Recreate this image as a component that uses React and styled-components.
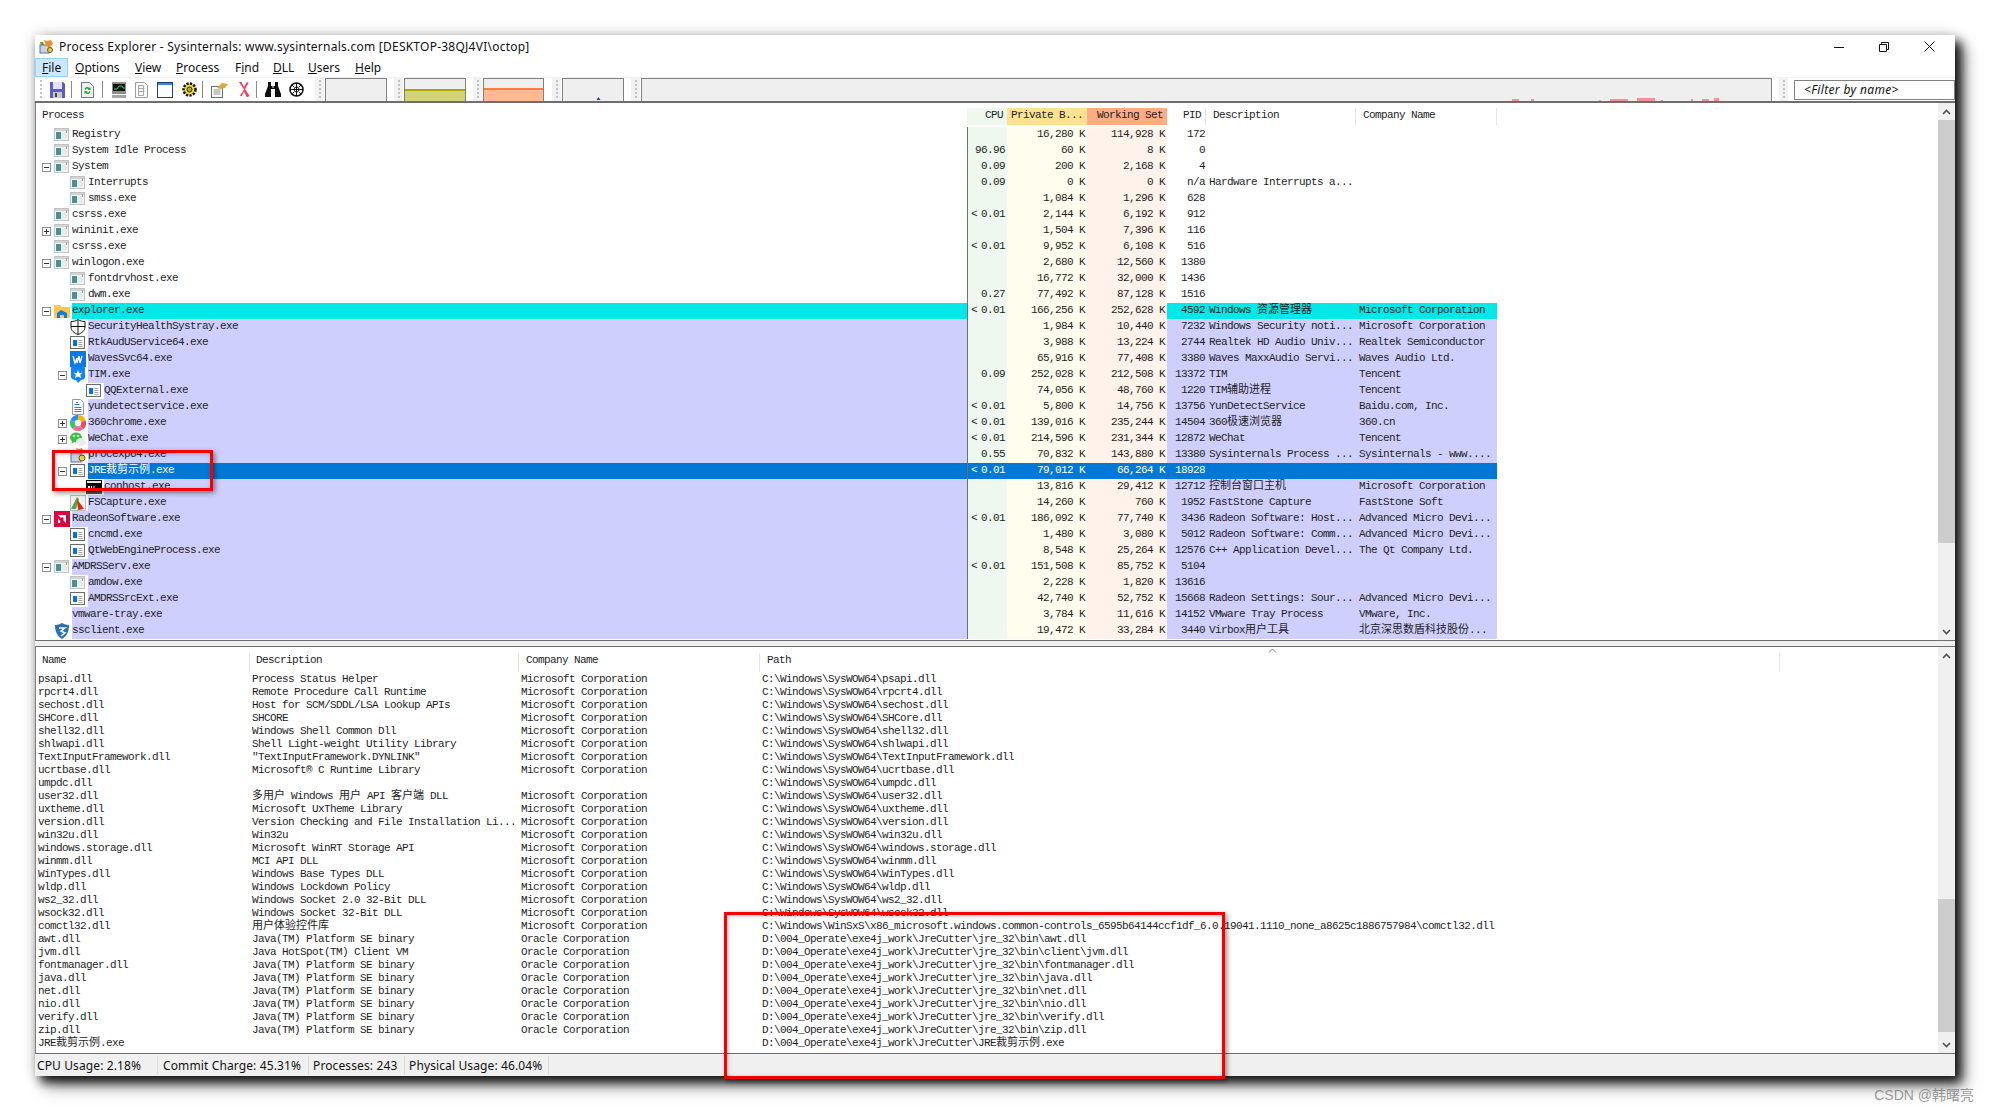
import React from 'react';
import styled, { createGlobalStyle } from 'styled-components';

const Global = createGlobalStyle`
  html, body { margin: 0; padding: 0; background: #fff; }
  body { width: 1990px; height: 1110px; overflow: hidden; position: relative; }
`;

const MONO = `"Liberation Mono", "Noto Sans CJK SC", monospace`;
const UI = `"Noto Sans", "Liberation Sans", sans-serif`;

const Page = styled.div`
  padding: 35px 0 0 35px;
`;

const Window = styled.div`
  width: 1920px;
  height: 1040px;
  display: flex;
  flex-direction: column;
  background: #fff;
  box-shadow: 6px 7px 10px rgba(0, 0, 0, 0.9), 10px 12px 16px rgba(0, 0, 0, 0.35), 0 0 14px rgba(0, 0, 0, 0.2);
  font-family: ${MONO};
  font-size: 11px;
  letter-spacing: -0.6px;
  color: #1d1d1d;
`;

const TitleBar = styled.div`
  flex: none;
  height: 23px;
  display: flex;
  align-items: center;
  padding-left: 4px;
  font-family: ${UI};
  font-size: 12px;
  letter-spacing: 0;
  color: #111;
`;

const TitleText = styled.span`
  margin-left: 5px;
  flex: 1;
  letter-spacing: 0.24px;
`;

const WinButtons = styled.div`
  display: flex;
  align-items: center;
  gap: 35px;
  padding-right: 20px;
`;

const MenuBar = styled.div`
  flex: none;
  height: 19px;
  display: flex;
  align-items: center;
  font-family: ${UI};
  font-size: 12px;
  letter-spacing: 0;
  color: #111;
`;

const MenuItem = styled.div`
  box-sizing: border-box;
  height: 19px;
  line-height: 18px;
  width: ${(p) => p.$w}px;
  padding-left: 6px;
  background: ${(p) => (p.$active ? '#cce8ff' : 'transparent')};
  border: 1px solid ${(p) => (p.$active ? '#99d1ff' : 'transparent')};
  u { text-underline-offset: 1px; }
`;

const Toolbar = styled.div`
  flex: none;
  box-sizing: border-box;
  height: 26px;
  display: flex;
  align-items: stretch;
  border-bottom: 2px solid #6e6e6e;
  border-top: 1px solid #f2f2f2;
`;

const Grip = styled.div`
  width: ${(p) => p.$w || 9}px;
  margin-left: ${(p) => p.$ml || 0}px;
  flex: none;
  background: ${(p) => (p.$plain ? 'transparent' : '#f2f2f2')};
  display: flex;
  justify-content: center;
  &::before {
    content: '';
    width: 2px;
    background: repeating-linear-gradient(#c2c2c2 0 2px, transparent 2px 4px);
    margin: 2px 0;
  }
`;

const ToolIcon = styled.div`
  flex: none;
  width: ${(p) => p.$w}px;
  margin-left: ${(p) => p.$ml}px;
  display: flex;
  align-items: center;
`;

const ToolSep = styled.div`
  flex: none;
  width: 1px;
  margin: 3px 0 3px ${(p) => p.$ml}px;
  background: #8a8a8a;
`;

const Graph = styled.div`
  box-sizing: border-box;
  position: relative;
  flex: none;
  width: ${(p) => p.$w}px;
  margin-left: ${(p) => p.$ml}px;
  background: #efefef;
  border: 1px solid #808080;
  border-bottom: none;
  overflow: hidden;
`;

const GraphFill = styled.div`
  position: absolute;
  left: 0;
  right: 0;
  bottom: 0;
  height: ${(p) => p.$h}px;
  background: ${(p) => p.$fill};
  border-top: 2px solid ${(p) => p.$line};
`;

const GraphSvg = styled.svg`
  position: absolute;
  left: 0;
  bottom: 0;
`;

const FilterBox = styled.div`
  box-sizing: border-box;
  flex: none;
  width: 161px;
  height: 20px;
  margin: 2px 0 0 6px;
  padding-left: 9px;
  border: 1px solid #808080;
  font-family: ${UI};
  font-size: 12px;
  font-style: italic;
  letter-spacing: 0.35px;
  line-height: 18px;
  color: #111;
`;

const Pane = styled.div`
  flex: none;
  height: ${(p) => p.$h}px;
  display: flex;
  border-left: 1px solid #808080;
  border-top: ${(p) => (p.$line ? '1px solid #6e6e6e' : 'none')};
  border-bottom: 1px solid #6e6e6e;
`;

const ListArea = styled.div`
  flex: 1;
  min-width: 0;
  overflow: hidden;
`;

const HeaderRow = styled.div`
  display: flex;
  height: ${(p) => p.$h}px;
`;

const HeadCell = styled.div`
  box-sizing: border-box;
  position: relative;
  flex: none;
  width: ${(p) => p.$w}px;
  height: ${(p) => p.$ch}px;
  margin-top: ${(p) => p.$mt}px;
  padding: ${(p) => p.$pad || '0'};
  line-height: ${(p) => p.$lh}px;
  text-align: ${(p) => (p.$right ? 'right' : 'left')};
  background: ${(p) => p.$bg || 'transparent'};
  border-right: ${(p) => (p.$sep ? '1px solid #e4e4e4' : 'none')};
  white-space: nowrap;
`;

const SortCaret = styled.svg`
  position: absolute;
  left: 508px;
  top: -5px;
`;

const ProcRow = styled.div`
  display: flex;
  height: 16px;
  line-height: 15px;
  white-space: nowrap;
  color: ${(p) => (p.$tone === 'sel' ? '#fff' : 'inherit')};
`;

const TreeCell = styled.div`
  flex: none;
  width: 931px;
  display: flex;
  padding-left: ${(p) => 6 + p.$depth * 16}px;
  box-sizing: border-box;
`;

const ExpandSlot = styled.div`
  flex: none;
  width: 12px;
  padding-top: 4px;
  box-sizing: border-box;
`;

const ExpandBox = styled.div`
  box-sizing: border-box;
  width: 9px;
  height: 9px;
  position: relative;
  border: 1px solid #8d8d8d;
  background: #fff;
  &::before {
    content: '';
    position: absolute;
    left: 1px;
    top: 3px;
    width: 5px;
    height: 1px;
    background: #333;
  }
  &::after {
    content: '';
    display: ${(p) => (p.$open ? 'none' : 'block')};
    position: absolute;
    left: 3px;
    top: 1px;
    width: 1px;
    height: 5px;
    background: #333;
  }
`;

const IconSlot = styled.div`
  flex: none;
  width: 18px;
  height: 16px;
  svg { display: block; }
`;

const tones = {
  none: 'transparent',
  cyan: '#00e8e8',
  violet: '#cfcffd',
  sel: '#0078d7',
};

const NameCell = styled.div`
  flex: 1;
  background: ${(p) => tones[p.$tone]};
`;

const DataCell = styled.div`
  box-sizing: border-box;
  flex: none;
  width: ${(p) => p.$w}px;
  padding: ${(p) => p.$pad || '0'};
  text-align: ${(p) => (p.$right ? 'right' : 'left')};
  background: ${(p) => p.$bg};
  border-left: ${(p) => (p.$divide ? '1px solid #707070' : 'none')};
`;

const CpuInner = styled.div`
  display: flex;
  justify-content: space-between;
  padding: 0 2px 0 3px;
`;

const DllRow = styled.div`
  display: flex;
  box-sizing: border-box;
  height: 13px;
  padding-top: 1px;
  line-height: 13px;
  white-space: nowrap;
`;

const DllCell = styled.div`
  flex: none;
  width: ${(p) => p.$w}px;
  padding-left: 2px;
  box-sizing: border-box;
`;

const Scrollbar = styled.div`
  flex: none;
  width: 17px;
  display: flex;
  flex-direction: column;
  background: #f0f0f0;
`;

const ScrollArrow = styled.div`
  flex: none;
  height: 17px;
  display: flex;
  align-items: center;
  justify-content: center;
`;

const ScrollTrack = styled.div`
  flex: 1;
`;

const ScrollThumb = styled.div`
  height: ${(p) => p.$h}px;
  margin-top: ${(p) => p.$top}px;
  background: #cdcdcd;
`;

const Splitter = styled.div`
  flex: none;
  height: 5px;
  background: #f0f0f0;
`;

const StatusBar = styled.div`
  flex: none;
  height: 22px;
  display: flex;
  background: #f0f0f0;
  font-family: ${UI};
  font-size: 12px;
  letter-spacing: 0.12px;
  color: #111;
`;

const StatusCell = styled.div`
  box-sizing: border-box;
  flex: none;
  width: ${(p) => p.$w}px;
  height: 18px;
  padding-left: ${(p) => p.$pad}px;
  border-right: 1px solid #d9d9d9;
  margin: 2px 0;
  line-height: 20px;
`;

const Callout = styled.div`
  position: absolute;
  box-sizing: border-box;
  left: ${(p) => p.$x}px;
  top: ${(p) => p.$y}px;
  width: ${(p) => p.$w}px;
  height: ${(p) => p.$h}px;
  border: 3px solid #f40000;
  box-shadow: 2px 2px 5px rgba(0, 0, 0, 0.45), inset 1px 1px 4px rgba(0, 0, 0, 0.25);
`;

const Watermark = styled.div`
  position: absolute;
  right: 16px;
  bottom: 6px;
  font-family: "Liberation Sans", "Noto Sans CJK SC", sans-serif;
  font-size: 14px;
  color: rgba(110, 110, 110, 0.7);
`;

const Cjk = styled.span`
  font-family: "Noto Sans CJK SC", sans-serif;
  font-size: 11px;
  letter-spacing: 0;
  line-height: 0;
`;

const Txt = ({ s }) =>
  String(s)
    .split(/([\u4e00-\u9fff]+)/)
    .map((part, i) => (/[\u4e00-\u9fff]/.test(part) ? <Cjk key={i}>{part}</Cjk> : part));

/* ---------- icons ---------- */

const ExeIcon = () => (
  <svg width="16" height="16" viewBox="0 0 16 16">
    <rect x="0.500" y="1.500" width="14" height="12" fill="#f4f4f4" stroke="#c2c2c2" />
    <rect x="1" y="2" width="13" height="2" fill="#d4d4d4" />
    <rect x="2" y="5" width="5" height="7" fill="#4d908d" />
    <rect x="8" y="5" width="5" height="7" fill="#e6ecec" />
    <rect x="12" y="3" width="1" height="3" fill="#999" />
  </svg>
);

const WinIcon = () => (
  <svg width="16" height="16" viewBox="0 0 16 16">
    <rect x="0.500" y="1.500" width="14" height="12" fill="#fff" stroke="#6b6b6b" />
    <rect x="3" y="5" width="4" height="6" fill="#0b72d4" />
    <path d="M8.500 5.500h4M8.500 7.500h4M8.500 9.500h4M8.500 11.500h4" stroke="#a0a0a0" />
  </svg>
);

const FolderIcon = () => (
  <svg width="16" height="16" viewBox="0 0 16 16">
    <path d="M0 2h6l2 2h8v11H0z" fill="#f7c94e" />
    <path d="M3 15V10l4-3 6 3v5h-3v-3H6v3z" fill="#1978d4" />
  </svg>
);

const ShieldIcon = () => (
  <svg width="16" height="16" viewBox="0 0 16 16">
    <path d="M8 .5C6 2 3.500 2.500 1 2.500V8c0 3.500 3 6 7 7.500 4-1.500 7-4 7-7.500V2.500C12.500 2.500 10 2 8 .5z" fill="#fff" stroke="#111" />
    <path d="M8 1v14M1 7.500h14" stroke="#111" />
  </svg>
);

const WavesIcon = () => (
  <svg width="16" height="16" viewBox="0 0 16 16">
    <rect width="16" height="16" fill="#0a78e6" />
    <path d="M3 5l2 7 2-5v5l2-7 1 7 2-7" fill="none" stroke="#fff" strokeWidth="1.300" />
  </svg>
);

const TimIcon = () => (
  <svg width="16" height="16" viewBox="0 0 16 16">
    <path d="M2 0h12a1 1 0 0 1 1 1v9c0 2-2 3-4 3l-3 3-2-3c-2 0-5-1-5-3V1a1 1 0 0 1 1-1z" fill="#1186f2" />
    <path d="M8 3l1.300 3 3.200-.3-2.300 2.300 1 3L8 9.500 4.800 11l1-3L3.500 5.700 6.700 6z" fill="#fff" />
  </svg>
);

const DocIcon = () => (
  <svg width="16" height="16" viewBox="0 0 16 16">
    <path d="M2.500.500h8l3 3v12h-11z" fill="#fff" stroke="#8c9bb0" />
    <path d="M6 3.500h2M4.500 5.500h5" stroke="#2a6fc0" strokeWidth="1.200" />
    <path d="M4.500 8.500h7M4.500 10.500h7M4.500 12.500h7" stroke="#4a7dbb" />
  </svg>
);

const ChromeIcon = () => (
  <svg width="16" height="16" viewBox="0 0 16 16">
    <path d="M8 8V0a8 8 0 0 1 7.600 5.500z" fill="#f7b500" />
    <path d="M8 8l7.600-2.500A8 8 0 0 1 13 14.300z" fill="#ea4a6a" />
    <path d="M8 8l5 6.300A8 8 0 0 1 3 14.300z" fill="#f76b9a" />
    <path d="M8 8l-5 6.300A8 8 0 0 1 .4 5.500z" fill="#35c95d" />
    <path d="M8 8L.4 5.500A8 8 0 0 1 8 0z" fill="#2b8df0" />
    <circle cx="8" cy="8" r="3.200" fill="#fff" />
  </svg>
);

const WeChatIcon = () => (
  <svg width="16" height="16" viewBox="0 0 16 16">
    <ellipse cx="6" cy="6.500" rx="6" ry="5" fill="#3fc04a" />
    <path d="M2 9.500l-.5 3 3-1.500z" fill="#3fc04a" />
    <ellipse cx="11" cy="11" rx="5" ry="4" fill="#e9eeea" />
    <circle cx="4" cy="5" r="0.900" fill="#fff" />
    <circle cx="8" cy="5" r="0.900" fill="#fff" />
  </svg>
);

const ProcexpIcon = () => (
  <svg width="16" height="16" viewBox="0 0 16 16">
    <rect x="1" y="6" width="10" height="9" fill="#c9d3e6" stroke="#5e6f94" />
    <path d="M6 1l3 1 3-1 2 4-3 3-3-1z" fill="#e8902c" />
    <circle cx="12" cy="11" r="3" fill="#f2cb4a" stroke="#6f5a10" />
  </svg>
);

const ConsoleIcon = () => (
  <svg width="16" height="16" viewBox="0 0 16 16">
    <rect y="1" width="16" height="14" fill="#000" />
    <rect x="1" y="2" width="14" height="2" fill="#e4e4e4" />
    <path d="M2 7h2v3H2zM5 7h1v3H5zM7.500 7h1v3h-1z" fill="#fff" />
    <rect y="13" width="16" height="2" fill="#555" />
  </svg>
);

const CaptureIcon = () => (
  <svg width="16" height="16" viewBox="0 0 16 16">
    <rect x="0.500" y="0.500" width="15" height="15" fill="#f2f2f2" stroke="#bbb" />
    <path d="M1 14L7 2l2 2-3 10z" fill="#5aa63a" />
    <path d="M7 4l7 10-6 1z" fill="#d62a1a" />
  </svg>
);

const RadeonIcon = () => (
  <svg width="16" height="16" viewBox="0 0 16 16">
    <rect width="16" height="16" fill="#e0003c" />
    <path d="M4 4h8v8l-2.500-2.500V6.500H6.500zM4 12V7.500L6.200 9.700V12z" fill="#fff" />
  </svg>
);

const GuardIcon = () => (
  <svg width="16" height="16" viewBox="0 0 16 16">
    <path d="M1 2c3 0 5-1 7-2 2 1 4 2 7 2 0 6-2 11-7 14C3 13 1 8 1 2z" fill="#2a6fb0" />
    <path d="M5 5h6L7 8l4 2-4 3" fill="none" stroke="#fff" strokeWidth="1.500" />
  </svg>
);

const ICONS = {
  exe: ExeIcon, win: WinIcon, folder: FolderIcon, shield: ShieldIcon, waves: WavesIcon,
  tim: TimIcon, doc: DocIcon, chrome: ChromeIcon, wechat: WeChatIcon, procexp: ProcexpIcon,
  console: ConsoleIcon, capture: CaptureIcon, radeon: RadeonIcon, guard: GuardIcon,
};

const AppLogo = () => (
  <svg width="15" height="14" viewBox="0 0 15 14">
    <rect x="1" y="5" width="9" height="8" fill="#c9d3e6" stroke="#5e6f94" />
    <path d="M5 0l3 1 4-1 2 4-3 3-4-1z" fill="#e8902c" />
    <path d="M1 2l3 0 1 3H2z" fill="#4f9a3c" />
    <circle cx="11" cy="10" r="2.500" fill="#f2cb4a" stroke="#6f5a10" />
  </svg>
);

const Save = () => (
  <svg width="15" height="16" viewBox="0 0 15 16">
    <path d="M0 0h13l2 2v14H0z" fill="#5c5cc4" />
    <rect x="3" y="0" width="9" height="7" fill="#e2e2f6" />
    <rect x="3" y="10" width="9" height="6" fill="#c8c8d0" />
    <rect x="5" y="11" width="2" height="4" fill="#444" />
  </svg>
);

const Refresh = () => (
  <svg width="13" height="16" viewBox="0 0 13 16">
    <path d="M.5.500h8l4 4v11H.5z" fill="#eef0f4" stroke="#6e7890" />
    <path d="M3.500 7a3 3 0 0 1 5-1l1-1v3H6.500l1-1a2 2 0 0 0-3 1zM9.500 10a3 3 0 0 1-5 1l-1 1V9h3l-1 1a2 2 0 0 0 3-1z" fill="#2da02d" />
  </svg>
);

const Monitor = () => (
  <svg width="14" height="16" viewBox="0 0 14 16">
    <rect width="14" height="12" fill="#8d8d8d" />
    <rect x="1" y="2" width="12" height="7" fill="#111" />
    <path d="M2 7h3l2-3h3l1 2h2" fill="none" stroke="#2fe02f" />
    <rect y="13" width="14" height="3" fill="#a5a5a5" />
  </svg>
);

const Pages = () => (
  <svg width="13" height="16" viewBox="0 0 13 16">
    <path d="M.5.500h9l3 3v12H.5z" fill="#fff" stroke="#9c9c9c" />
    <path d="M3.500 3.500h5v10h-5zM3.500 6.500h6M3.500 9.500h6" fill="none" stroke="#a8a8a8" />
  </svg>
);

const WinTool = () => (
  <svg width="16" height="16" viewBox="0 0 16 16">
    <rect x="0.500" y="0.500" width="15" height="15" fill="#fff" stroke="#1f3f70" />
    <rect x="1" y="1" width="14" height="2" fill="#3a86dd" />
  </svg>
);

const Gear = () => (
  <svg width="15" height="17" viewBox="0 0 15 17">
    <circle cx="7.500" cy="8.500" r="6" fill="#f1df2e" stroke="#111" strokeWidth="2.500" strokeDasharray="2.200 1.300" />
    <circle cx="7.500" cy="8.500" r="2.500" fill="#c5a800" stroke="#222" />
  </svg>
);

const Props = () => (
  <svg width="17" height="16" viewBox="0 0 17 16">
    <rect x="0.500" y="4.500" width="11" height="11" fill="#fff" stroke="#5d6f90" />
    <path d="M2.500 8h7M2.500 10h7M2.500 12h7" stroke="#8a8a8a" />
    <path d="M6 6l5-5 6 1-3 4-5 1z" fill="#d9a83a" />
  </svg>
);

const KillX = () => (
  <svg width="12" height="15" viewBox="0 0 12 15">
    <path d="M1 0l2.500 0 2.500 5 3-5 1.500 1-3.500 6 4.500 7-2.500 1.500-3-6-2.500 5-1.500-1L6 7.500z" fill="#f43a66" />
  </svg>
);

const Binoculars = () => (
  <svg width="16" height="15" viewBox="0 0 16 15">
    <path d="M3 0h3v4h4V0h3v4l3 8v3h-6V7H6v8H0v-3l3-8z" fill="#0d0d0d" />
    <rect x="7" y="4" width="2" height="2" fill="#777" />
  </svg>
);

const Target = () => (
  <svg width="15" height="15" viewBox="0 0 15 15">
    <circle cx="7.500" cy="7.500" r="6.500" fill="#fff" stroke="#111" strokeWidth="1.500" />
    <path d="M7.500 1v13M1 7.500h13" stroke="#111" />
    <circle cx="7.500" cy="7.500" r="2.500" fill="none" stroke="#111" />
    <path d="M3 3l2 2M12 3l-2 2M3 12l2-2M12 12l-2-2" stroke="#111" />
  </svg>
);

// x, width, height of the small pink spikes in the wide graph
const NOISE = [
  [870, 7, 2], [889, 3, 2], [957, 2, 1], [968, 18, 2], [995, 18, 3],
  [1019, 2, 1], [1049, 2, 2], [1060, 7, 2], [1072, 5, 3],
];

/* ---------- data ---------- */

const MS = 'Microsoft Corporation';
const AMD = 'Advanced Micro Devi...';

const procs = [
  { n: 'Registry', d: 0, i: 'exe', p: '16,280 K', w: '114,928 K', id: '172' },
  { n: 'System Idle Process', d: 0, i: 'exe', c: '96.96', p: '60 K', w: '8 K', id: '0' },
  { n: 'System', d: 0, b: 'open', i: 'exe', c: '0.09', p: '200 K', w: '2,168 K', id: '4' },
  { n: 'Interrupts', d: 1, i: 'exe', c: '0.09', p: '0 K', w: '0 K', id: 'n/a', ds: 'Hardware Interrupts a...' },
  { n: 'smss.exe', d: 1, i: 'exe', p: '1,084 K', w: '1,296 K', id: '628' },
  { n: 'csrss.exe', d: 0, i: 'exe', c: '< 0.01', p: '2,144 K', w: '6,192 K', id: '912' },
  { n: 'wininit.exe', d: 0, b: 'closed', i: 'exe', p: '1,504 K', w: '7,396 K', id: '116' },
  { n: 'csrss.exe', d: 0, i: 'exe', c: '< 0.01', p: '9,952 K', w: '6,108 K', id: '516' },
  { n: 'winlogon.exe', d: 0, b: 'open', i: 'exe', p: '2,680 K', w: '12,560 K', id: '1380' },
  { n: 'fontdrvhost.exe', d: 1, i: 'exe', p: '16,772 K', w: '32,000 K', id: '1436' },
  { n: 'dwm.exe', d: 1, i: 'exe', c: '0.27', p: '77,492 K', w: '87,128 K', id: '1516' },
  { n: 'explorer.exe', d: 0, b: 'open', i: 'folder', t: 'cyan', c: '< 0.01', p: '166,256 K', w: '252,628 K', id: '4592', ds: 'Windows 资源管理器', co: MS },
  { n: 'SecurityHealthSystray.exe', d: 1, i: 'shield', t: 'violet', p: '1,984 K', w: '10,440 K', id: '7232', ds: 'Windows Security noti...', co: MS },
  { n: 'RtkAudUService64.exe', d: 1, i: 'win', t: 'violet', p: '3,988 K', w: '13,224 K', id: '2744', ds: 'Realtek HD Audio Univ...', co: 'Realtek Semiconductor' },
  { n: 'WavesSvc64.exe', d: 1, i: 'waves', t: 'violet', p: '65,916 K', w: '77,408 K', id: '3380', ds: 'Waves MaxxAudio Servi...', co: 'Waves Audio Ltd.' },
  { n: 'TIM.exe', d: 1, b: 'open', i: 'tim', t: 'violet', c: '0.09', p: '252,028 K', w: '212,508 K', id: '13372', ds: 'TIM', co: 'Tencent' },
  { n: 'QQExternal.exe', d: 2, i: 'win', t: 'violet', p: '74,056 K', w: '48,760 K', id: '1220', ds: 'TIM辅助进程', co: 'Tencent' },
  { n: 'yundetectservice.exe', d: 1, i: 'doc', t: 'violet', c: '< 0.01', p: '5,800 K', w: '14,756 K', id: '13756', ds: 'YunDetectService', co: 'Baidu.com, Inc.' },
  { n: '360chrome.exe', d: 1, b: 'closed', i: 'chrome', t: 'violet', c: '< 0.01', p: '139,016 K', w: '235,244 K', id: '14504', ds: '360极速浏览器', co: '360.cn' },
  { n: 'WeChat.exe', d: 1, b: 'closed', i: 'wechat', t: 'violet', c: '< 0.01', p: '214,596 K', w: '231,344 K', id: '12872', ds: 'WeChat', co: 'Tencent' },
  { n: 'procexp64.exe', d: 1, i: 'procexp', t: 'violet', c: '0.55', p: '70,832 K', w: '143,880 K', id: '13380', ds: 'Sysinternals Process ...', co: 'Sysinternals - www....' },
  { n: 'JRE裁剪示例.exe', d: 1, b: 'open', i: 'win', t: 'sel', c: '< 0.01', p: '79,012 K', w: '66,264 K', id: '18928' },
  { n: 'conhost.exe', d: 2, i: 'console', t: 'violet', p: '13,816 K', w: '29,412 K', id: '12712', ds: '控制台窗口主机', co: MS },
  { n: 'FSCapture.exe', d: 1, i: 'capture', t: 'violet', p: '14,260 K', w: '760 K', id: '1952', ds: 'FastStone Capture', co: 'FastStone Soft' },
  { n: 'RadeonSoftware.exe', d: 0, b: 'open', i: 'radeon', t: 'violet', c: '< 0.01', p: '186,092 K', w: '77,740 K', id: '3436', ds: 'Radeon Software: Host...', co: AMD },
  { n: 'cncmd.exe', d: 1, i: 'win', t: 'violet', p: '1,480 K', w: '3,080 K', id: '5012', ds: 'Radeon Software: Comm...', co: AMD },
  { n: 'QtWebEngineProcess.exe', d: 1, i: 'win', t: 'violet', p: '8,548 K', w: '25,264 K', id: '12576', ds: 'C++ Application Devel...', co: 'The Qt Company Ltd.' },
  { n: 'AMDRSServ.exe', d: 0, b: 'open', i: 'exe', t: 'violet', c: '< 0.01', p: '151,508 K', w: '85,752 K', id: '5104' },
  { n: 'amdow.exe', d: 1, i: 'exe', t: 'violet', p: '2,228 K', w: '1,820 K', id: '13616' },
  { n: 'AMDRSSrcExt.exe', d: 1, i: 'win', t: 'violet', p: '42,740 K', w: '52,752 K', id: '15668', ds: 'Radeon Settings: Sour...', co: AMD },
  { n: 'vmware-tray.exe', d: 0, t: 'violet', p: '3,784 K', w: '11,616 K', id: '14152', ds: 'VMware Tray Process', co: 'VMware, Inc.' },
  { n: 'ssclient.exe', d: 0, i: 'guard', t: 'violet', p: '19,472 K', w: '33,284 K', id: '3440', ds: 'Virbox用户工具', co: '北京深思数盾科技股份...' },
];

const SYS = 'C:\\Windows\\SysWOW64\\';
const JRE = 'D:\\004_Operate\\exe4j_work\\JreCutter\\jre_32\\bin\\';
const JAVA = 'Java(TM) Platform SE binary';
const ORA = 'Oracle Corporation';

const sysDll = (n, ds) => [n, ds, MS, SYS + n];

const dlls = [
  sysDll('psapi.dll', 'Process Status Helper'),
  sysDll('rpcrt4.dll', 'Remote Procedure Call Runtime'),
  sysDll('sechost.dll', 'Host for SCM/SDDL/LSA Lookup APIs'),
  sysDll('SHCore.dll', 'SHCORE'),
  sysDll('shell32.dll', 'Windows Shell Common Dll'),
  sysDll('shlwapi.dll', 'Shell Light-weight Utility Library'),
  sysDll('TextInputFramework.dll', '"TextInputFramework.DYNLINK"'),
  sysDll('ucrtbase.dll', 'Microsoft® C Runtime Library'),
  ['umpdc.dll', '', '', SYS + 'umpdc.dll'],
  sysDll('user32.dll', '多用户 Windows 用户 API 客户端 DLL'),
  sysDll('uxtheme.dll', 'Microsoft UxTheme Library'),
  sysDll('version.dll', 'Version Checking and File Installation Li...'),
  sysDll('win32u.dll', 'Win32u'),
  sysDll('windows.storage.dll', 'Microsoft WinRT Storage API'),
  sysDll('winmm.dll', 'MCI API DLL'),
  sysDll('WinTypes.dll', 'Windows Base Types DLL'),
  sysDll('wldp.dll', 'Windows Lockdown Policy'),
  sysDll('ws2_32.dll', 'Windows Socket 2.0 32-Bit DLL'),
  sysDll('wsock32.dll', 'Windows Socket 32-Bit DLL'),
  ['comctl32.dll', '用户体验控件库', MS, 'C:\\Windows\\WinSxS\\x86_microsoft.windows.common-controls_6595b64144ccf1df_6.0.19041.1110_none_a8625c1886757984\\comctl32.dll'],
  ['awt.dll', JAVA, ORA, JRE + 'awt.dll'],
  ['jvm.dll', 'Java HotSpot(TM) Client VM', ORA, JRE + 'client\\jvm.dll'],
  ['fontmanager.dll', JAVA, ORA, JRE + 'fontmanager.dll'],
  ['java.dll', JAVA, ORA, JRE + 'java.dll'],
  ['net.dll', JAVA, ORA, JRE + 'net.dll'],
  ['nio.dll', JAVA, ORA, JRE + 'nio.dll'],
  ['verify.dll', JAVA, ORA, JRE + 'verify.dll'],
  ['zip.dll', JAVA, ORA, JRE + 'zip.dll'],
  ['JRE裁剪示例.exe', '', '', 'D:\\004_Operate\\exe4j_work\\JreCutter\\JRE裁剪示例.exe'],
];

const menus = [
  ['F', 'ile', 33, true], ['O', 'ptions', 60], ['V', 'iew', 41], ['P', 'rocess', 59],
  ['', 'Find', 38], ['D', 'LL', 35], ['U', 'sers', 47], ['H', 'elp', 40],
];

/* ---------- parts ---------- */

const Arrow = ({ down }) => (
  <svg width="9" height="6" viewBox="0 0 9 6">
    <path d={down ? 'M1 1l3.500 3.500L8 1' : 'M1 5l3.500-3.500L8 5'} fill="none" stroke="#505050" strokeWidth="1.600" />
  </svg>
);

const Bar = ({ top, height }) => (
  <Scrollbar>
    <ScrollArrow><Arrow /></ScrollArrow>
    <ScrollTrack><ScrollThumb $top={top} $h={height} /></ScrollTrack>
    <ScrollArrow><Arrow down /></ScrollArrow>
  </Scrollbar>
);

const ProcessRow = ({ row }) => {
  const Icon = ICONS[row.i];
  const tone = row.t || 'none';
  const sel = tone === 'sel';
  return (
    <ProcRow $tone={tone}>
      <TreeCell $depth={row.d}>
        <ExpandSlot>{row.b && <ExpandBox $open={row.b === 'open'} />}</ExpandSlot>
        <IconSlot>{Icon && <Icon />}</IconSlot>
        <NameCell $tone={tone}><Txt s={row.n} /></NameCell>
      </TreeCell>
      <DataCell $w={40} $divide $bg={sel ? tones.sel : '#eef8ee'}>
        <CpuInner>
          <span>{row.c && row.c.startsWith('<') ? '<' : ''}</span>
          <span>{row.c ? row.c.replace('< ', '') : ''}</span>
        </CpuInner>
      </DataCell>
      <DataCell $w={80} $right $pad="0 2px 0 0" $bg={sel ? tones.sel : '#fffdee'}>{row.p}</DataCell>
      <DataCell $w={80} $right $pad="0 2px 0 0" $bg={sel ? tones.sel : '#fff2ea'}>{row.w}</DataCell>
      <DataCell $w={39} $right $pad="0 1px 0 0" $bg={tones[tone]}>{row.id}</DataCell>
      <DataCell $w={150} $pad="0 0 0 3px" $bg={tones[tone]}>{row.ds && <Txt s={row.ds} />}</DataCell>
      <DataCell $w={141} $pad="0 0 0 3px" $bg={tones[tone]}>{row.co && <Txt s={row.co} />}</DataCell>
    </ProcRow>
  );
};

const procHead = { $ch: 17, $mt: 5, $lh: 15 };
const dllHead = { $ch: 19, $mt: 6, $lh: 15, $sep: true };

export default function App() {
  return (
    <>
      <Global />
      <Page>
        <Window>
          <TitleBar>
            <AppLogo />
            <TitleText>Process Explorer - Sysinternals: www.sysinternals.com [DESKTOP-38QJ4VI\octop]</TitleText>
            <WinButtons>
              <svg width="10" height="10" viewBox="0 0 10 10"><path d="M0 5.500h10" stroke="#111" /></svg>
              <svg width="10" height="10" viewBox="0 0 10 10"><path d="M.5 2.500h7v7h-7zM2.500 2.500v-2h7v7h-2" fill="none" stroke="#111" /></svg>
              <svg width="11" height="11" viewBox="0 0 11 11"><path d="M.5.500l10 10M10.500.500l-10 10" stroke="#111" /></svg>
            </WinButtons>
          </TitleBar>
          <MenuBar>
            {menus.map(([u, rest, w, active]) => (
              <MenuItem key={rest} $w={w} $active={active}>
                {u ? <u>{u}</u> : <>F<u>i</u>nd</>}
                {u ? rest : ''}
              </MenuItem>
            ))}
          </MenuBar>
          <Toolbar>
            <Grip $w={3} $ml={4} $plain />
            <ToolIcon $w={15} $ml={8}><Save /></ToolIcon>
            <ToolSep $ml={6} />
            <ToolIcon $w={13} $ml={9}><Refresh /></ToolIcon>
            <ToolSep $ml={8} />
            <ToolIcon $w={14} $ml={9}><Monitor /></ToolIcon>
            <ToolIcon $w={13} $ml={9}><Pages /></ToolIcon>
            <ToolIcon $w={16} $ml={9}><WinTool /></ToolIcon>
            <ToolIcon $w={15} $ml={9}><Gear /></ToolIcon>
            <ToolSep $ml={5} />
            <ToolIcon $w={17} $ml={8}><Props /></ToolIcon>
            <ToolIcon $w={12} $ml={10}><KillX /></ToolIcon>
            <ToolSep $ml={6} />
            <ToolIcon $w={16} $ml={8}><Binoculars /></ToolIcon>
            <ToolIcon $w={15} $ml={8}><Target /></ToolIcon>
            <Grip $ml={11} />
            <Graph $w={62} $ml={1} />
            <Grip $ml={7} />
            <Graph $w={62} $ml={1}><GraphFill $h={10} $line="#aca800" $fill="#d2d27a" /></Graph>
            <Grip $ml={7} />
            <Graph $w={61} $ml={1}><GraphFill $h={11} $line="#ff7d3c" $fill="#ffb997" /></Graph>
            <Grip $ml={8} />
            <Graph $w={62} $ml={1}>
              <GraphSvg width="62" height="5"><path d="M35.500 1l2 3h-4z" fill="#2233cc" /></GraphSvg>
            </Graph>
            <Grip $ml={7} />
            <Graph $w={1131} $ml={1}>
              <GraphSvg width="1131" height="3" viewBox="0 0 1131 3">
                {NOISE.map(([x, w, h]) => (
                  <rect key={x} x={x} y={3 - h} width={w} height={h} fill="#f79090" />
                ))}
              </GraphSvg>
            </Graph>
            <Grip $ml={7} />
            <FilterBox>&lt;Filter by name&gt;</FilterBox>
          </Toolbar>
          <Pane $h={537}>
            <ListArea>
              <HeaderRow $h={24}>
                <HeadCell {...procHead} $w={931} $pad="0 0 0 6px">Process</HeadCell>
                <HeadCell {...procHead} $w={40} $right $pad="0 4px 0 0" $bg="#eef8ee">CPU</HeadCell>
                <HeadCell {...procHead} $w={80} $pad="0 0 0 4px" $bg="#fde38f">Private B...</HeadCell>
                <HeadCell {...procHead} $w={80} $right $pad="0 4px 0 0" $bg="#ffab85">Working Set</HeadCell>
                <HeadCell {...procHead} $w={39} $right $sep $pad="0 4px 0 0">PID</HeadCell>
                <HeadCell {...procHead} $w={150} $sep $pad="0 0 0 7px">Description</HeadCell>
                <HeadCell {...procHead} $w={141} $sep $pad="0 0 0 7px">Company Name</HeadCell>
              </HeaderRow>
              {procs.map((row) => (
                <ProcessRow key={row.n + row.id} row={row} />
              ))}
            </ListArea>
            <Bar top={0} height={423} />
          </Pane>
          <Splitter />
          <Pane $h={406} $line>
            <ListArea>
              <HeaderRow $h={25}>
                <HeadCell {...dllHead} $w={214} $pad="0 0 0 6px">Name</HeadCell>
                <HeadCell {...dllHead} $w={269} $pad="0 0 0 6px">Description</HeadCell>
                <HeadCell {...dllHead} $w={241} $pad="0 0 0 7px">Company Name</HeadCell>
                <HeadCell {...dllHead} $w={1020} $pad="0 0 0 7px">
                  Path
                  <SortCaret width="9" height="5" viewBox="0 0 9 5">
                    <path d="M1 4.500l3.500-3.500L8 4.500" fill="none" stroke="#777" />
                  </SortCaret>
                </HeadCell>
              </HeaderRow>
              {dlls.map(([name, desc, company, path]) => (
                <DllRow key={name}>
                  <DllCell $w={214}><Txt s={name} /></DllCell>
                  <DllCell $w={269}><Txt s={desc} /></DllCell>
                  <DllCell $w={241}><Txt s={company} /></DllCell>
                  <DllCell $w={1020}><Txt s={path} /></DllCell>
                </DllRow>
              ))}
            </ListArea>
            <Bar top={235} height={133} />
          </Pane>
          <StatusBar>
            <StatusCell $w={123} $pad={2}>CPU Usage: 2.18%</StatusCell>
            <StatusCell $w={151} $pad={5}>Commit Charge: 45.31%</StatusCell>
            <StatusCell $w={96} $pad={4}>Processes: 243</StatusCell>
            <StatusCell $w={144} $pad={4}>Physical Usage: 46.04%</StatusCell>
          </StatusBar>
        </Window>
      </Page>
      <Callout $x={52} $y={450} $w={161} $h={41} />
      <Callout $x={724} $y={912} $w={501} $h={167} />
      <Watermark>CSDN @韩曙亮</Watermark>
    </>
  );
}
